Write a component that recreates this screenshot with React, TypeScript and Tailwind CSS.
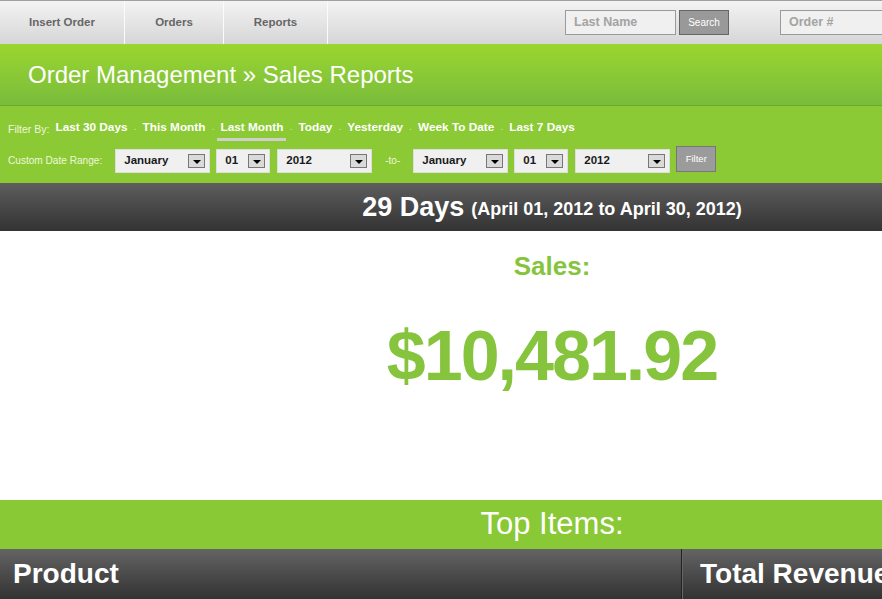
const font = "font-['Liberation_Sans',Arial,sans-serif]";

const filters = ["Last 30 Days", "This Month", "Last Month", "Today", "Yesterday", "Week To Date", "Last 7 Days"];

function Select({ value, className }: { value: string; className: string }) {
  return (
    <div className={`flex h-6 items-center justify-between border border-[#dedede] bg-[#f0f0f0] pl-2 pr-[4px] ${className}`}>
      <span className="text-[11.5px] font-bold text-[#1a1a1a]">{value}</span>
      <span className="flex h-[14px] w-[17px] items-center justify-center border border-[#777] bg-[#dadada]">
        <span className="mt-[2px] h-0 w-0 border-x-[4px] border-t-[4px] border-x-transparent border-t-black" />
      </span>
    </div>
  );
}

export default function App() {
  return (
    <div className={`h-screen w-full overflow-hidden bg-white ${font}`}>
      <div className="w-[1104px]">
        {/* top nav */}
        <div className="flex h-11 items-center border-t border-[#a0a0a0] bg-gradient-to-b from-[#f3f3f3] to-[#d6d6d6]">
          <div className="flex h-full text-[11.5px] font-bold text-[#666]">
            <div className="flex w-[125px] items-center justify-center border-r border-[#fbfbfb]">Insert Order</div>
            <div className="flex w-[99px] items-center justify-center border-r border-[#fbfbfb]">Orders</div>
            <div className="flex w-[104px] items-center justify-center border-r border-[#fbfbfb]">Reports</div>
          </div>
          <div className="ml-[237px] flex h-[25px] w-[111px] items-center border border-[#9a9a9a] bg-[#f0f0f0] pl-2 text-[12.5px] font-bold text-[#a3a3a3]">
            Last Name
          </div>
          <div className="ml-[3px] flex h-[25px] w-[50px] items-center justify-center border border-[#666] bg-[#999] text-[10px] text-white">
            Search
          </div>
          <div className="ml-[51px] flex h-[25px] w-[140px] items-center border border-[#9a9a9a] bg-[#f0f0f0] pl-2 text-[12.5px] font-bold text-[#a3a3a3]">
            Order #
          </div>
        </div>

        {/* title */}
        <div className="flex h-[62px] items-center border-b border-[#6aa834] bg-gradient-to-b from-[#9ad62e] to-[#79bc3b] pl-7 text-[24px] text-white">
          Order Management » Sales Reports
        </div>

        {/* filters */}
        <div className="h-[77px] bg-[#8bca35] px-2 pt-[13px]">
          <div className="flex items-center">
            <span className="mr-[6px] text-[10.5px] text-[#eef7dd]">Filter By:</span>
            {filters.map((f, i) => (
              <span key={f} className="flex items-center">
                {i > 0 && <span className="mx-[6px] text-[9px] text-[#d6ecb5]">·</span>}
                <span
                  className={`text-[11.8px] font-bold text-white ${
                    f === "Last Month" ? "border-b-[3px] border-[#cfcfcf] px-[3px] pb-[1px] -mx-[3px]" : "border-b-[3px] border-transparent pb-[1px]"
                  }`}
                >
                  {f}
                </span>
              </span>
            ))}
          </div>
          <div className="mt-[8px] flex items-center">
            <span className="mr-[13px] text-[10.1px] text-[#eef7dd]">Custom Date Range:</span>
            <Select value="January" className="w-[95px]" />
            <Select value="01" className="ml-[6px] w-[54px]" />
            <Select value="2012" className="ml-[7px] w-[95px]" />
            <span className="mx-[13px] text-[10px] text-[#eef7dd]">-to-</span>
            <Select value="January" className="w-[95px]" />
            <Select value="01" className="ml-[6px] w-[54px]" />
            <Select value="2012" className="ml-[7px] w-[95px]" />
            <div className="-mt-[3px] ml-[6px] flex h-[26px] w-[40px] items-center justify-center border border-[#777] bg-[#9b9b9b] text-[9.5px] text-white">
              Filter
            </div>
          </div>
        </div>

        {/* date band */}
        <div className="flex h-12 items-center justify-center bg-gradient-to-b from-[#5e5e5e] to-[#333] font-bold text-white">
          <span className="text-[27px]">29 Days</span>
          <span className="ml-[7px] mt-[5px] text-[18px]">(April 01, 2012 to April 30, 2012)</span>
        </div>

        {/* sales */}
        <div className="flex h-[269px] flex-col items-center text-[#86c43e] font-bold">
          <div className="mt-[22px] text-[26px] leading-none">Sales:</div>
          <div className="mt-[42px] text-[70px] leading-none tracking-[-2px]">$10,481.92</div>
        </div>

        {/* top items */}
        <div className="flex h-[49px] items-center justify-center bg-[#89c935] text-[31px] text-white">Top Items:</div>

        {/* table header */}
        <div className="flex h-[50px] bg-gradient-to-b from-[#646464] to-[#333] text-[28px] font-bold text-white">
          <div className="flex w-[682px] items-center border-r border-[#222] pl-[13px]">Product</div>
          <div className="flex flex-1 items-center border-l border-[#666] pl-[17px]">Total Revenue</div>
        </div>
      </div>
    </div>
  );
}
